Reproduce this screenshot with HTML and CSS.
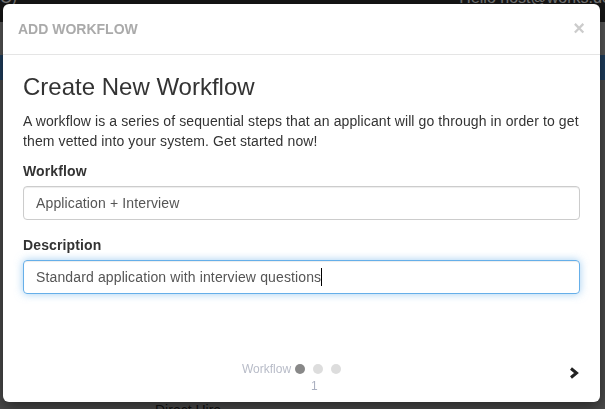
FILE: index.html
```html
<!DOCTYPE html>
<html lang="en">
<head>
    <meta charset="UTF-8">
    <meta name="viewport" content="width=device-width, initial-scale=1.0">
    <title>Add Workflow</title>
    <link rel="stylesheet" href="styles.css">
</head>
<body>
    <div class="page">
        <header class="navbar">
            <span class="brand">C)</span>
            <span class="user">Hello host@works.demo</span>
        </header>
        <div class="subnav"></div>
        <div class="toolbar"></div>
        <div class="content">
            <span class="job-type">Direct Hire</span>
        </div>
    </div>
    <div class="backdrop"></div>

    <div class="modal">
        <div class="modal-header">
            <h4 class="modal-title">ADD WORKFLOW</h4>
            <span class="close">&times;</span>
        </div>
        <div class="modal-body">
            <h2>Create New Workflow</h2>
            <p>A workflow is a series of sequential steps that an applicant will go through in order to get them vetted into your system. Get started now!</p>
            <div class="form-group">
                <label>Workflow</label>
                <div class="form-control">Application + Interview</div>
            </div>
            <div class="form-group">
                <label>Description</label>
                <div class="form-control focused">Standard application with interview questions<span class="caret-line"></span></div>
            </div>
        </div>
        <div class="modal-footer">
            <div class="steps">
                <div class="steps-row">
                    <span class="step-name">Workflow</span>
                    <span class="dot active"></span>
                    <span class="dot"></span>
                    <span class="dot"></span>
                </div>
                <div class="step-num">1</div>
            </div>
            <svg class="next" width="12" height="12" viewBox="0 0 12 12">
                <polyline points="3,1.5 8.5,6 3,10.5" fill="none" stroke="#222" stroke-width="3"/>
            </svg>
        </div>
    </div>
</body>
</html>
```

FILE: styles.css
```css
body {
    font-family: "Liberation Sans", Arial, sans-serif;
    font-size: 14px;
    color: #333;
    margin: 0;
    padding: 0;
    overflow: hidden;
    height: 409px;
    background-color: #7a7a7a;
}
.page {
    height: 409px;
    display: flex;
    flex-direction: column;
}
.navbar {
    height: 22px;
    background-color: #2c2c2c;
    display: flex;
    justify-content: space-between;
    align-items: flex-start;
    overflow: hidden;
}
.navbar span {
    font-size: 16px;
    line-height: 16px;
    color: #eee;
    margin-top: -10px;
}
.navbar .user {
    margin-right: -28px;
}
.subnav {
    height: 33px;
    background-color: #b0b0b0;
}
.toolbar {
    height: 25px;
    background-color: #3e7ebe;
}
.content {
    flex: 1;
    background-color: #999;
    display: flex;
    align-items: flex-end;
}
.job-type {
    margin-left: 155px;
    margin-bottom: -9px;
    font-size: 14px;
    color: #222;
}
.backdrop {
    position: fixed;
    inset: 0;
    background-color: rgba(0, 0, 0, 0.5);
}

/* modal */
.modal {
    position: absolute;
    top: 4px;
    left: 3px;
    width: 597px;
    height: 398px;
    background-color: #fff;
    border-radius: 6px;
    box-shadow: 0 5px 15px rgba(0, 0, 0, 0.5);
    display: flex;
    flex-direction: column;
}
.modal-header {
    padding: 15px;
    border-bottom: 1px solid #e5e5e5;
    display: flex;
    justify-content: space-between;
    align-items: center;
}
.modal-title {
    margin: 0;
    font-size: 14px;
    line-height: 20px;
    font-weight: bold;
    color: #aaa;
}
.close {
    font-size: 20px;
    font-weight: bold;
    line-height: 20px;
    color: #ccc;
    margin-top: -3px;
}
.modal-body {
    padding: 19px 20px 0;
    letter-spacing: 0.13px;
}
h2 {
    margin: 0 0 11px;
    font-size: 24px;
    font-weight: normal;
    line-height: 26px;
    letter-spacing: 0;
    color: #333;
}
p {
    margin: 0 -2px 10px 0;
    line-height: 20px;
    letter-spacing: 0.11px;
}
.form-group {
    margin-bottom: 15px;
}
label {
    display: block;
    font-weight: bold;
    line-height: 20px;
    margin-bottom: 5px;
}
.form-control {
    height: 34px;
    box-sizing: border-box;
    padding: 6px 12px;
    line-height: 20px;
    color: #555;
    border: 1px solid #ccc;
    border-radius: 4px;
    box-shadow: inset 0 1px 1px rgba(0, 0, 0, 0.075);
}
.form-control.focused {
    border-color: #66afe9;
    box-shadow: inset 0 1px 1px rgba(0, 0, 0, 0.075), 0 0 8px rgba(102, 175, 233, 0.6);
}
.caret-line {
    display: inline-block;
    width: 1px;
    height: 18px;
    background-color: #000;
    vertical-align: -4px;
}

/* wizard footer */
.modal-footer {
    margin-top: auto;
    padding: 0 20px 9px 0;
    display: flex;
    align-items: flex-start;
}
.steps {
    margin-left: 239px;
}
.steps-row {
    display: flex;
    align-items: center;
    height: 14px;
}
.step-name {
    font-size: 12px;
    color: #b8bcc8;
    margin-right: 4px;
}
.dot {
    width: 10px;
    height: 10px;
    border-radius: 50%;
    background-color: #ddd;
    margin-right: 8px;
}
.dot.active {
    background-color: #888;
}
.step-num {
    font-size: 12px;
    line-height: 14px;
    margin-top: 3px;
    margin-left: 69px;
    color: #aab0c0;
}
.next {
    margin-left: auto;
    margin-top: 5px;
}
```
